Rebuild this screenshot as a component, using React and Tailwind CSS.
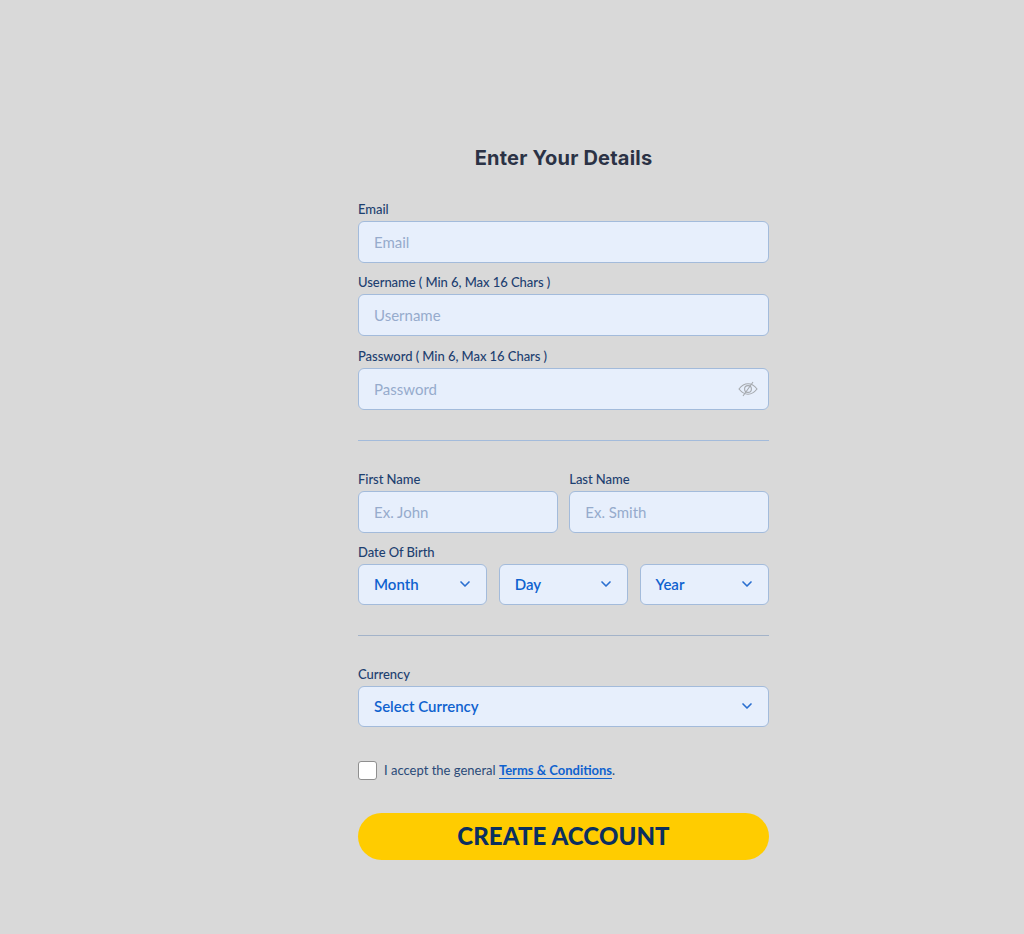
import { ChevronDown } from 'lucide-react'

const labelClass = 'block text-[13px] leading-4 font-medium tracking-[-0.05px] text-[#1d4070]'
const inputClass = 'mt-[3.9px] block w-full h-[42px] rounded-[6px] border border-[#a3bbdb] bg-[#e7effc] pl-[15px] pr-10 text-[15px] text-[#1c3c6b] outline-none placeholder:text-[#96abcc]'

function Field({ label, placeholder, type = 'text', children, className = '' }) {
  return (
    <div className={className}>
      <label className={labelClass}>{label}</label>
      <div className="relative">
        <input type={type} placeholder={placeholder} className={inputClass} />
        {children}
      </div>
    </div>
  )
}

function Select({ text, className = '' }) {
  return (
    <div className={`flex h-[41px] items-center justify-between rounded-[6px] border border-[#a3bbdb] bg-[#e7effc] pl-[15px] pr-[13px] text-[15px] font-semibold text-[#0f62cf] ${className}`}>
      <span>{text}</span>
      <ChevronDown size={16} strokeWidth={2.5} className="text-[#2a6fd0] -mt-[1px]" />
    </div>
  )
}

function EyeSlash() {
  return (
    <svg width="20" height="18" viewBox="0 0 20 18" fill="none" stroke="#a5a9ae" strokeWidth="1.1" className="absolute right-[11px] top-[12px]">
      <path d="M1 9 C4 5.2 7 3.8 10 3.8 C13 3.8 16 5.2 19 9 C16 12.8 13 14.2 10 14.2 C7 14.2 4 12.8 1 9 Z" />
      <circle cx="10" cy="9" r="3.4" />
      <path d="M5 16 L15 2" />
    </svg>
  )
}

export default function App() {
  return (
    <div className="min-h-[934px] bg-[#d9d9d9] pt-[146px] font-['Lato',sans-serif]">
      <div className="ml-[358px] w-[411px]">
        <h1 className="text-center [font-family:'Inter',sans-serif] text-[20px] leading-6 font-bold tracking-[0.2px] text-[#2b3245]">Enter Your Details</h1>

        <div className="mt-[31px] flex flex-col gap-[11.6px]">
          <Field label="Email" placeholder="Email" type="email" />
          <Field label="Username ( Min 6, Max 16 Chars )" placeholder="Username" />
          <Field label="Password ( Min 6, Max 16 Chars )" placeholder="Password" type="password">
            <EyeSlash />
          </Field>
        </div>

        <hr className="mt-[30px] border-t border-[#a3bbdb]" />

        <div className="mt-[30px] flex gap-[11.5px]">
          <Field label="First Name" placeholder="Ex. John" className="flex-1" />
          <Field label="Last Name" placeholder="Ex. Smith" className="flex-1" />
        </div>

        <div className="mt-[11px]">
          <label className={labelClass}>Date Of Birth</label>
          <div className="mt-[4px] flex gap-[11.3px]">
            <Select text="Month" className="flex-1" />
            <Select text="Day" className="flex-1" />
            <Select text="Year" className="flex-1" />
          </div>
        </div>

        <hr className="mt-[30px] border-t border-[#a3b3c9]" />

        <div className="mt-[30px]">
          <label className={labelClass}>Currency</label>
          <Select text="Select Currency" className="mt-[4px]" />
        </div>

        <div className="mt-[34px] flex items-center gap-[7px]">
          <input type="checkbox" className="h-[19px] w-[19px] appearance-none rounded-[3px] border border-[#8f8f8f] bg-white" />
          <span className="text-[13px] text-[#2a4a78]">
            I accept the general{' '}
            <a className="border-b border-[#0f62cf] font-bold text-[#0f62cf]">Terms &amp; Conditions</a>.
          </span>
        </div>

        <button className="mt-[32.5px] h-[47px] w-full rounded-full bg-[#ffcc00] text-[24px] font-black tracking-[0.1px] text-[#0b2f5f]">
          CREATE ACCOUNT
        </button>
      </div>
    </div>
  )
}
